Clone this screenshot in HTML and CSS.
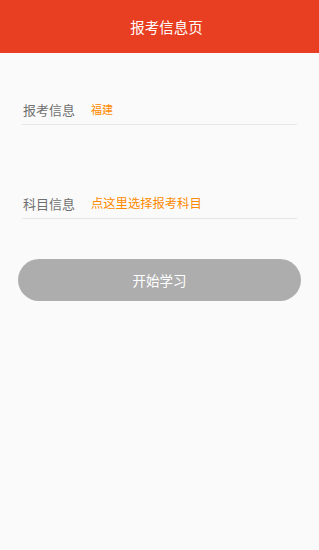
FILE: index.html
```html
<!DOCTYPE html>
<html lang="zh-CN">
<head>
  <meta charset="UTF-8" />
  <meta name="viewport" content="width=device-width, initial-scale=1.0"/>
  <title>报考信息页</title>
  <link rel="stylesheet" href="styles.css">
</head>
<body>

<!-- Header -->
<div class="header">
  <span class="header-title">报考信息页</span>
</div>

<!-- Form -->
<div class="form">
  <div class="row row-first">
    <span class="label">报考信息</span>
    <span class="value value-small">福建</span>
  </div>
  <div class="row row-second">
    <span class="label">科目信息</span>
    <span class="value">点这里选择报考科目</span>
  </div>
</div>

<button class="start-btn">开始学习</button>

</body>
</html>
```

FILE: styles.css
```css
html, body {
  margin: 0; padding: 0;
  background: #fafafa;
  font-family: "Noto Sans CJK SC", "Noto Sans", sans-serif;
}

/* Header */
.header {
  height: 53px;
  background: #e83e21;
  display: flex;
  justify-content: center;
  align-items: center;
  padding-left: 14px;
}

.header-title {
  color: #fff;
  font-size: 14.5px;
}

/* Form rows */
.form { padding: 0 22px; }

.row {
  display: flex;
  align-items: center;
  height: 30px;
  border-bottom: 1px solid #e6e6e6;
}

.row-first { margin-top: 41px; }
.row-second { margin-top: 63px; }

.label {
  width: 68px;
  flex-shrink: 0;
  font-size: 13px;
  color: #707070;
  padding-left: 1px;
}

.value {
  font-size: 12.3px;
  color: #ff8a00;
}

.value-small { font-size: 11px; }

/* Button */
.start-btn {
  display: block;
  margin: 40px 18px 0;
  width: calc(100% - 36px);
  height: 42px;
  border: none;
  border-radius: 21px;
  background: #adadad;
  color: #fff;
  font-family: inherit;
  font-size: 13.5px;
}
```
